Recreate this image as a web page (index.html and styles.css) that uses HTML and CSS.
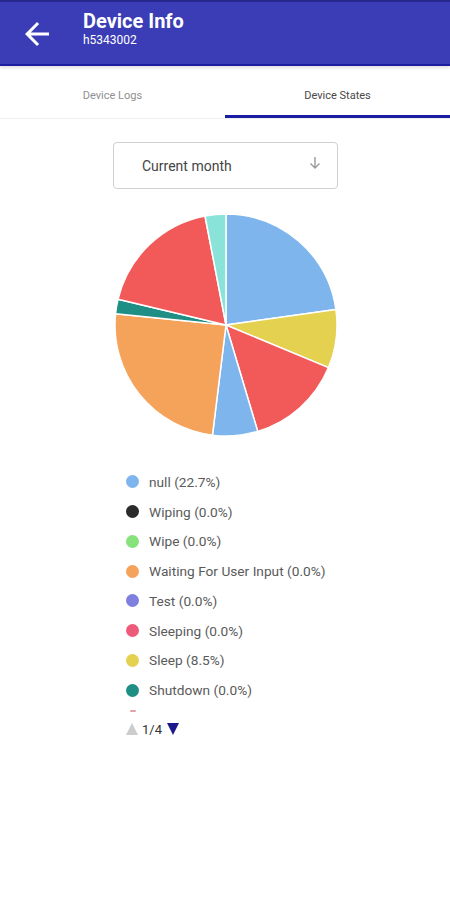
FILE: index.html
```html
<!DOCTYPE html>
<html>
<head>
<meta charset="utf-8">
<link rel="stylesheet" href="styles.css">
</head>
<body>
<header class="appbar">
  <svg class="back" viewBox="0 0 24 24" width="36" height="36"><path fill="#fff" d="M20 11H7.83l5.59-5.59L12 4l-8 8 8 8 1.41-1.41L7.83 13H20v-2z"/></svg>
  <div class="titles">
    <div class="title">Device Info</div>
    <div class="subtitle">h5343002</div>
  </div>
</header>
<nav class="tabs">
  <div class="tab">Device Logs</div>
  <div class="tab active">Device States</div>
</nav>
<main class="content">
  <div class="select">
    <span>Current month</span>
    <svg class="select-arrow" viewBox="0 0 12 14" width="12" height="14"><path d="M6 1v11M1.5 7.5L6 12l4.5-4.5" fill="none" stroke="#9a9a9a" stroke-width="1.4"/></svg>
  </div>
  <svg class="pie" viewBox="0 0 224 224" width="224" height="224">
    <g stroke="#fff" stroke-width="1.5" stroke-linejoin="round">
      <path fill="#7db5ec" d="M112 112 L112 1 A111 111 0 0 1 221.92 96.55 Z"/>
      <path fill="#e5d150" d="M112 112 L221.92 96.55 A111 111 0 0 1 214.48 154.66 Z"/>
      <path fill="#f25a5a" d="M112 112 L214.48 154.66 A111 111 0 0 1 143.71 218.37 Z"/>
      <path fill="#7db5ec" d="M112 112 L143.71 218.37 A111 111 0 0 1 98.47 222.17 Z"/>
      <path fill="#f5a25b" d="M112 112 L98.47 222.17 A111 111 0 0 1 1.56 100.78 Z"/>
      <path fill="#1f8f85" d="M112 112 L1.56 100.78 A111 111 0 0 1 4.02 86.27 Z"/>
      <path fill="#f25a5a" d="M112 112 L4.02 86.27 A111 111 0 0 1 91.01 2.99 Z"/>
      <path fill="#8ae3d9" d="M112 112 L91.01 2.99 A111 111 0 0 1 112 1 Z"/>
    </g>
  </svg>
  <div class="legend-wrap">
    <ul class="legend">
      <li><i class="dot c-blue"></i>null (22.7%)</li>
      <li><i class="dot c-black"></i>Wiping (0.0%)</li>
      <li><i class="dot c-green"></i>Wipe (0.0%)</li>
      <li><i class="dot c-orange"></i>Waiting For User Input (0.0%)</li>
      <li><i class="dot c-purple"></i>Test (0.0%)</li>
      <li><i class="dot c-pink"></i>Sleeping (0.0%)</li>
      <li><i class="dot c-yellow"></i>Sleep (8.5%)</li>
      <li><i class="dot c-teal"></i>Shutdown (0.0%)</li>
      <li class="peek"><i class="dot c-red"></i></li>
    </ul>
    <div class="pager">
      <span class="tri up"></span>
      <span class="page">1/4</span>
      <span class="tri down"></span>
    </div>
  </div>
</main>
</body>
</html>
```
FILE: styles.css
```css
* { box-sizing: border-box; }
html, body { margin: 0; padding: 0; background: #fff; }
body { font-family: Roboto, "Noto Sans", "Liberation Sans", sans-serif; width: 450px; height: 900px; overflow: hidden; }

.appbar {
  height: 66px;
  background: #3a3db6;
  border-top: 2px solid #25278a;
  border-bottom: 2px solid #1d1fa3;
  display: flex;
  align-items: center;
  padding-left: 19px;
  box-shadow: 0 2px 3px rgba(0,0,0,0.12);
  position: relative;
  z-index: 1;
}
.back { display: block; margin-right: 28px; margin-top: 2px; }
.titles { display: flex; flex-direction: column; margin-top: -6px; }
.title { color: #fff; font-weight: 700; font-size: 20px; line-height: 22px; margin-top: -3px; }
.subtitle { color: #fff; font-size: 12px; line-height: 14px; margin-top: 1px; }

.tabs {
  display: flex;
  height: 53px;
  border-bottom: 1px solid #eeeeee;
}
.tab {
  flex: 1;
  display: flex;
  align-items: center;
  justify-content: center;
  font-size: 11px;
  color: #8f8f8f;
  padding-top: 6px;
}
.tab.active { color: #484848; border-bottom: 3px solid #1b1da0; padding-top: 9px; }

.content { display: flex; flex-direction: column; align-items: center; }

.select {
  margin-top: 23px;
  width: 225px;
  height: 47px;
  border: 1px solid #d0d0d0;
  border-radius: 4px;
  display: flex;
  align-items: center;
  justify-content: space-between;
  padding: 0 16px 0 28px;
  font-size: 14px;
  color: #444;
  margin-left: 1px;
}
.select-arrow { margin-top: -6px; }

.pie { display: block; margin-top: 24px; margin-left: 1px; }

.legend-wrap { align-self: flex-start; margin-left: 126px; margin-top: 30px; }
.legend {
  list-style: none;
  margin: 0;
  padding: 0;
  height: 247px;
  overflow: hidden;
}
.legend li {
  height: 29.75px;
  display: flex;
  align-items: center;
  font-size: 13.7px;
  color: #5a5a5a;
  white-space: nowrap;
}
.legend li.peek { align-items: flex-start; padding-top: 5px; }
.dot { display: block; width: 13px; height: 13px; border-radius: 50%; margin-right: 10px; }
.peek .dot { width: 6px; height: 2px; border-radius: 1px; margin-left: 4px; background: #e6a0a8; }
.c-blue { background: #7db5ec; }
.c-black { background: #2b2b2b; }
.c-green { background: #86e27a; }
.c-orange { background: #f5a25b; }
.c-purple { background: #7f7fe0; }
.c-pink { background: #ee5b7a; }
.c-yellow { background: #e5d150; }
.c-teal { background: #1f8f85; }

.pager { display: flex; align-items: center; height: 18px; margin-top: 6px; }
.tri { width: 0; height: 0; border-left: 6px solid transparent; border-right: 6px solid transparent; }
.tri.up { border-bottom: 12px solid #cccccc; }
.tri.down { border-top: 12px solid #1a1a8c; }
.page { font-size: 13px; color: #333; margin: 0 5px 0 4px; }
```
